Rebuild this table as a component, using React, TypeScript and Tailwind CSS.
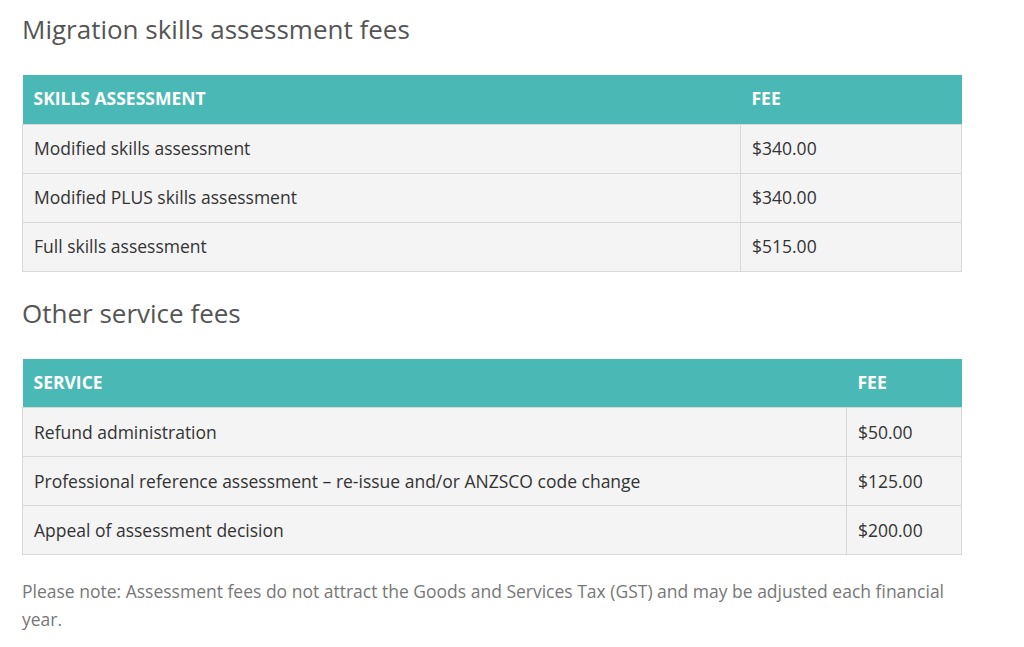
const skills = [
  { name: 'Modified skills assessment', fee: '$340.00' },
  { name: 'Modified PLUS skills assessment', fee: '$340.00' },
  { name: 'Full skills assessment', fee: '$515.00' },
];

const services = [
  { name: 'Refund administration', fee: '$50.00' },
  { name: 'Professional reference assessment – re-issue and/or ANZSCO code change', fee: '$125.00' },
  { name: 'Appeal of assessment decision', fee: '$200.00' },
];

function FeeTable({
  heading,
  rows,
  feeWidth,
}: {
  heading: string;
  rows: { name: string; fee: string }[];
  feeWidth: string;
}) {
  return (
    <table className="w-[940px] border-collapse table-fixed">
      <colgroup>
        <col />
        <col className={feeWidth} />
      </colgroup>
      <thead>
        <tr className="h-[49px] bg-[#4ab9b5]">
          <th className="px-[11px] pb-[2px] text-left text-[17.5px] font-bold uppercase text-white">{heading}</th>
          <th className="px-[11px] pb-[2px] text-left text-[17.5px] font-bold uppercase text-white">Fee</th>
        </tr>
      </thead>
      <tbody>
        {rows.map(r => (
          <tr key={r.name} className="h-[49px] bg-[#f4f4f4]">
            <td className="border border-[#d8d8d8] px-[11px] text-[17.5px] text-[#333]">{r.name}</td>
            <td className="border border-[#d8d8d8] px-[11px] text-[17.5px] text-[#333]">{r.fee}</td>
          </tr>
        ))}
      </tbody>
    </table>
  );
}

export default function App() {
  return (
    <div className="min-h-[647px] bg-white pl-[22px] pt-[11px] font-['Open_Sans',sans-serif]">
      <h2 className="text-[26px] leading-[36px] text-[#555] mb-[28px]">Migration skills assessment fees</h2>
      <FeeTable heading="Skills assessment" rows={skills} feeWidth="w-[221px]" />
      <h2 className="mt-[23px] text-[26px] leading-[36px] text-[#555] mb-[28px]">Other service fees</h2>
      <FeeTable heading="Service" rows={services} feeWidth="w-[115px]" />
      <p className="mt-[22px] w-[940px] text-[17.5px] leading-[28px] text-[#777]">
        Please note: Assessment fees do not attract the Goods and Services Tax (GST) and may be adjusted each
        financial year.
      </p>
    </div>
  );
}
